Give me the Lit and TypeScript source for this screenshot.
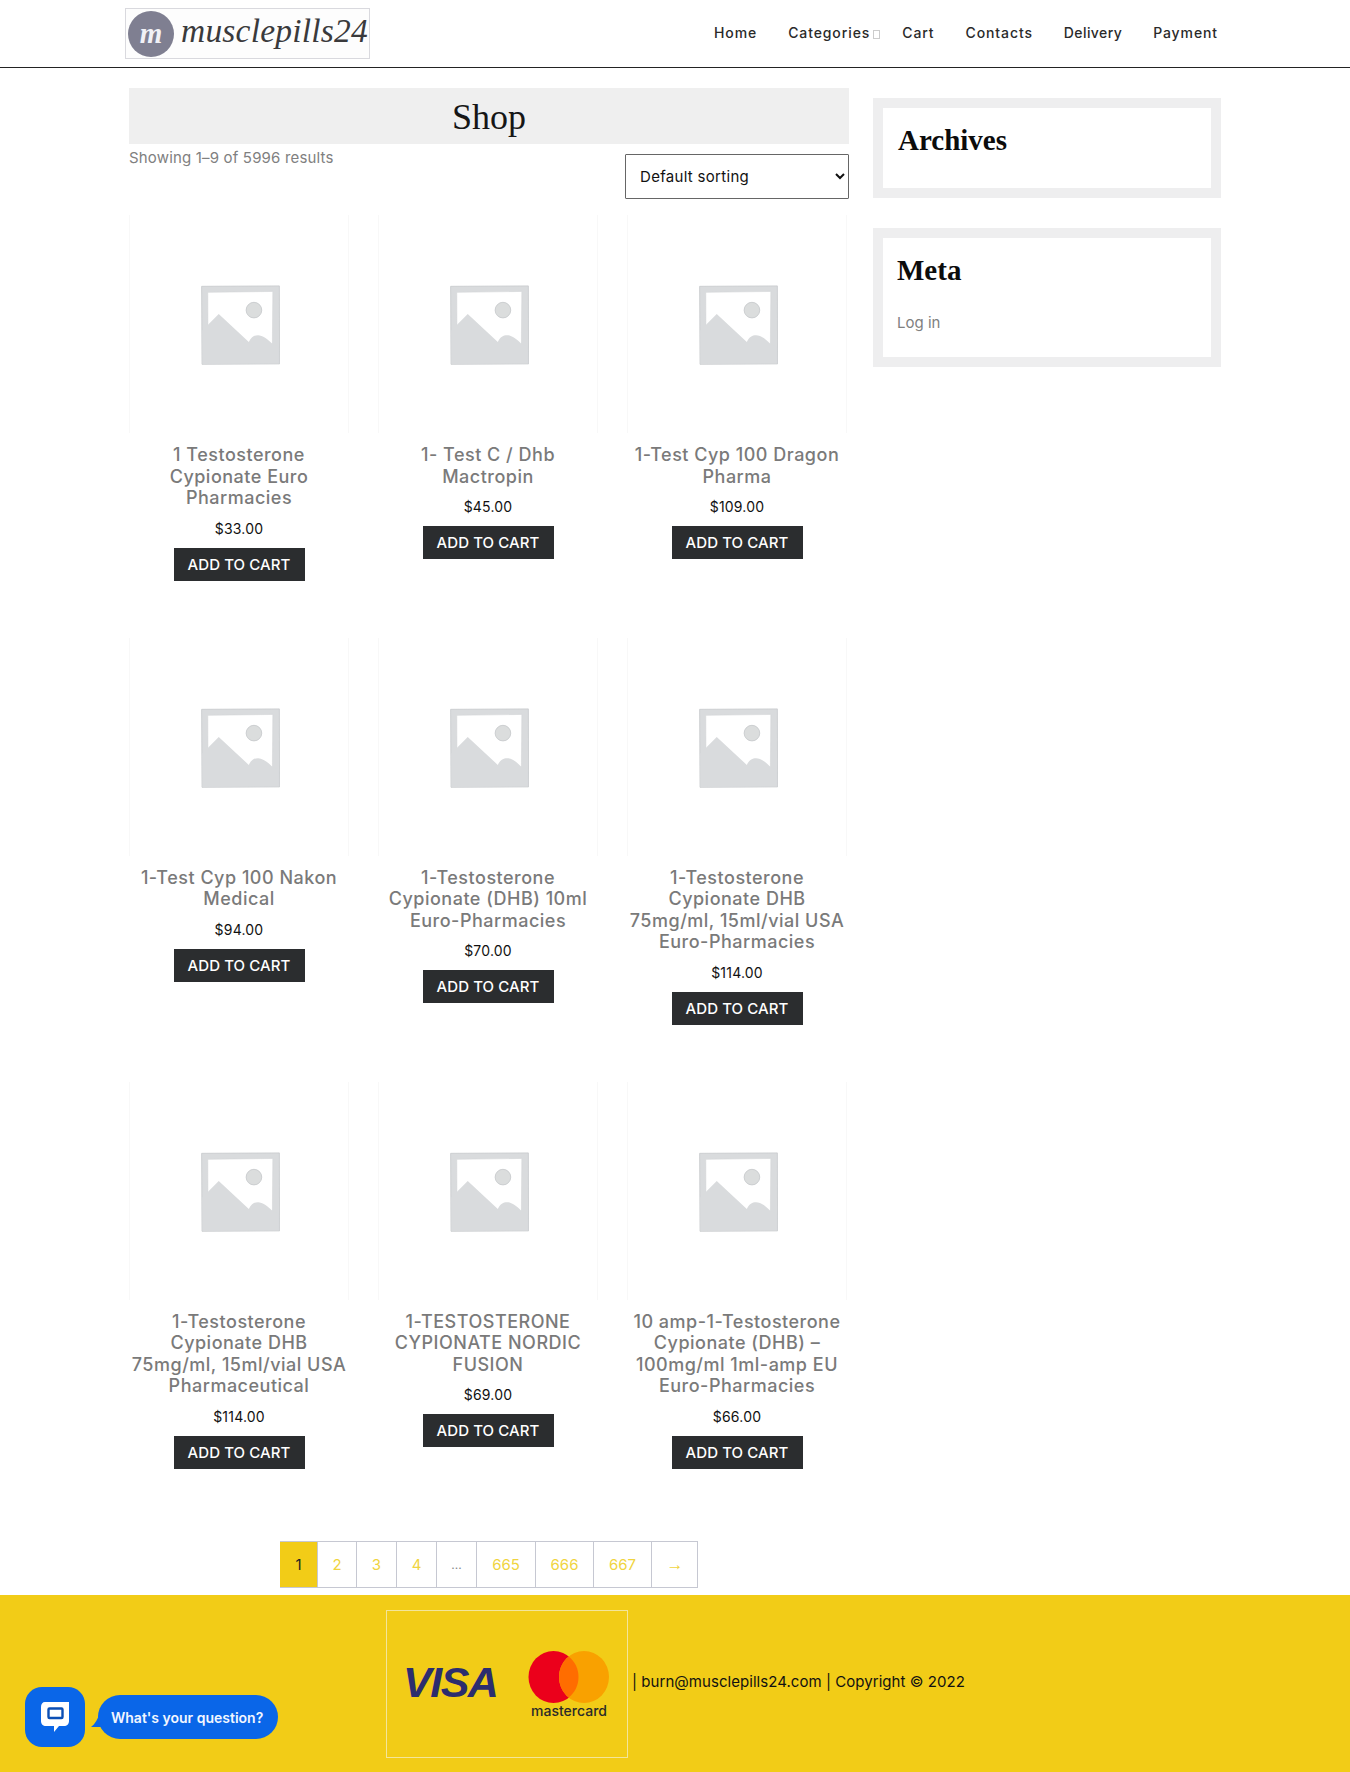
import { LitElement, html, css, svg } from "lit";
import { customElement } from "lit/decorators.js";

const products = [
  { t: ["1 Testosterone", "Cypionate Euro", "Pharmacies"], p: "$33.00" },
  { t: ["1- Test C / Dhb", "Mactropin"], p: "$45.00" },
  { t: ["1-Test Cyp 100 Dragon", "Pharma"], p: "$109.00" },
  { t: ["1-Test Cyp 100 Nakon", "Medical"], p: "$94.00" },
  { t: ["1-Testosterone", "Cypionate (DHB) 10ml", "Euro-Pharmacies"], p: "$70.00" },
  { t: ["1-Testosterone", "Cypionate DHB", "75mg/ml, 15ml/vial USA", "Euro-Pharmacies"], p: "$114.00" },
  { t: ["1-Testosterone", "Cypionate DHB", "75mg/ml, 15ml/vial USA", "Pharmaceutical"], p: "$114.00" },
  { t: ["1-TESTOSTERONE", "CYPIONATE NORDIC", "FUSION"], p: "$69.00" },
  { t: ["10 amp-1-Testosterone", "Cypionate (DHB) –", "100mg/ml 1ml-amp EU", "Euro-Pharmacies"], p: "$66.00" },
];

const placeholder = svg`<svg class="ph" viewBox="0 0 77 77" width="79" height="80" aria-hidden="true">
  <path d="M0.6 0.8 L76.4 0.4 L76.6 76.4 L1 76.8 Z" fill="#d9dbdd" stroke="#c8cacd" stroke-width=".8"/>
  <path d="M6.6 6.7 L70 5.8 L69.6 57 L6.8 60 Z" fill="#fff" stroke="#cfd1d4" stroke-width=".5"/>
  <path d="M6.6 38.4 L17.3 27.7 L46.6 55 C49 50 52 48.4 55.6 48.4 C60 48.4 65 52 69.4 56.7 L76 60 L76 76 L1.4 76.4 L1.2 44 Z" fill="#d9dbdd"/>
  <circle cx="51.6" cy="24" r="7.6" fill="#dbdddd" stroke="#c6c8cb" stroke-width=".8"/>
</svg>`;

@customElement("app-root")
export class AppRoot extends LitElement {
  static styles = css`
    :host {
      display: block;
      width: 1350px;
      height: 1772px;
      position: relative;
      overflow: hidden;
      background: #fff;
      font-family: Inter, "Noto Sans", sans-serif;
      color: #111;
    }
    * { box-sizing: border-box; }
    .header {
      height: 68px;
      border-bottom: 1px solid #232323;
      display: flex;
      align-items: flex-start;
      justify-content: space-between;
      padding: 8px 132px 0 125px;
    }
    .logo {
      width: 245px;
      height: 51px;
      border: 1px solid #d9d9de;
      display: flex;
      align-items: center;
      padding-left: 2px;
      gap: 7px;
      background: #fdfdfd;
    }
    .logo-mark {
      width: 46px;
      height: 46px;
      border-radius: 50%;
      background: #7f7f91;
      color: #f1f1f6;
      font: italic 700 29px "Liberation Serif", serif;
      display: flex;
      align-items: center;
      justify-content: center;
      flex: none;
    }
    .logo-word {
      font: italic 400 33.5px/1 "Liberation Serif", serif;
      color: #3a3a3c;
      letter-spacing: 0.2px;
      white-space: nowrap;
      transform: translateY(-3px);
    }
    .nav {
      display: flex;
      padding-top: 16px;
      font-size: 14px;
      font-weight: 450;
      line-height: 18px;
      color: #2a2a2a;
      letter-spacing: 0.9px;
    }
    .nav a { margin-left: 31px; white-space: nowrap; }
    .nav a.cat { display: flex; align-items: center; margin-right: -5px; }
    .tofu {
      width: 7px;
      height: 9px;
      border: 1px solid #ccc;
      margin: 3px 0 0 3px;
    }
    .nav a.cart-link { margin-left: 27px; }
    .nav a.delivery { letter-spacing: 0.4px; }
    .page {
      display: flex;
      gap: 24px;
      margin: 20px 0 0 129px;
      width: 1092px;
    }
    .main { width: 720px; flex: none; }
    .banner {
      height: 56px;
      background: #efefef;
      font: 400 36px/58px "Liberation Serif", serif;
      text-align: center;
      color: #161616;
    }
    .toolbar {
      height: 71px;
      display: flex;
      justify-content: space-between;
      align-items: flex-start;
      font-size: 15px;
      letter-spacing: 0.17px;
      color: #808080;
    }
    .count { line-height: 28px; }
    select {
      width: 224px;
      height: 45px;
      margin-top: 10px;
      border: 1px solid #666;
      background: #fff;
      padding: 0 10px;
      font: 400 15px Inter, sans-serif;
      letter-spacing: 0.3px;
      color: #111;
      border-radius: 1px;
    }
    .grid {
      display: grid;
      grid-template-columns: repeat(3, 220px);
      column-gap: 29px;
      row-gap: 57px;
      align-items: start;
    }
    .product {
      display: flex;
      flex-direction: column;
      align-items: center;
      text-align: center;
    }
    .thumb {
      width: 100%;
      height: 218px;
      border-left: 1px solid #f8f8f8;
      border-right: 1px solid #f8f8f8;
      display: flex;
      align-items: center;
      justify-content: center;
      padding: 2px 0 0 2px;
    }
    .title {
      margin-top: 11px;
      font-size: 18px;
      font-weight: 500;
      line-height: 21.5px;
      letter-spacing: 0.5px;
      color: #7a7a7a;
      white-space: nowrap;
    }
    .price {
      margin-top: 9px;
      font-size: 14px;
      line-height: 21px;
      color: #111;
      letter-spacing: 0.2px;
    }
    .btn {
      margin-top: 9px;
      width: 131px;
      height: 33px;
      background: #2b2d2f;
      color: #fff;
      font-size: 15px;
      font-weight: 450;
      line-height: 33px;
      letter-spacing: 0.1px;
      white-space: nowrap;
    }
    .pager {
      margin: 72px 0 0 151px;
      display: grid;
      grid-template-columns: 37px 39px 40px 40px 40px 59px 58px 58px 47px;
      width: 418px;
      height: 47px;
      border: 1px solid #c6c8d2;
      border-left: 0;
      font-size: 15px;
      line-height: 45px;
      text-align: center;
      color: #f0d440;
    }
    .pager span { border-left: 1px solid #c6c8d2; }
    .pager .cur { background: #f2cc17; color: #222; border-left: 0; }
    .pager .dots { color: #888; font-size: 12px; }
    .pager .arrow { font-family: "Liberation Sans", sans-serif; font-size: 17px; }
    .side {
      flex: 1;
      display: flex;
      flex-direction: column;
      gap: 30px;
      padding-top: 10px;
    }
    .widget {
      border: 10px solid #eeeeef;
      padding: 14px 15px 0;
    }
    .widget.arch { height: 100px; }
    .widget.meta { height: 139px; padding-left: 14px; }
    .widget h2 {
      margin: 0;
      font: 700 29px/36px "Liberation Serif", serif;
      color: #0c0c0c;
    }
    .widget a {
      display: block;
      margin-top: 25px;
      font-size: 15px;
      color: #808080;
      line-height: 20px;
    }
    .footer {
      position: absolute;
      left: 0;
      right: 0;
      top: 1595px;
      height: 177px;
      background: #f2cc17;
      display: flex;
      align-items: center;
      padding: 0 0 0 386px;
      gap: 4px;
    }
    .cards {
      width: 242px;
      height: 148px;
      border: 1px solid #f3e59a;
      display: flex;
      align-items: flex-start;
      padding: 40px 0 0 16px;
    }
    .visa {
      font: italic 700 43px/44px "Liberation Sans", sans-serif;
      color: #2c2d6e;
      letter-spacing: -1.5px;
      width: 125px;
      margin-top: 9px;
      flex: none;
    }
    .mc { display: flex; flex-direction: column; align-items: center; }
    .mc svg { display: block; }
    .mc-word {
      margin-top: 1px;
      font: 500 14px/14px Inter, sans-serif;
      color: #2a2a2a;
    }
    .copy { font-size: 15px; letter-spacing: 0.05px; color: #111; white-space: nowrap; margin-top: -4px; }
    .chat {
      position: absolute;
      left: 25px;
      top: 1687px;
      width: 60px;
      height: 60px;
      border-radius: 17px;
      background: #0a66e8;
      display: flex;
      align-items: center;
      justify-content: center;
    }
    .bubble {
      position: absolute;
      left: 98px;
      top: 1695px;
      width: 180px;
      height: 44px;
      border-radius: 22px;
      background: #0a66e8;
      color: #f2f6ff;
      font-size: 14px;
      font-weight: 600;
      line-height: 45px;
      padding-left: 13px;
      white-space: nowrap;
    }
    .tail {
      position: absolute;
      left: 90px;
      top: 1711px;
    }
  `;

  render() {
    return html`
      <div class="header">
        <div class="logo">
          <div class="logo-mark">m</div>
          <div class="logo-word">musclepills24</div>
        </div>
        <nav class="nav">
          <a>Home</a>
          <a class="cat">Categories<span class="tofu"></span></a>
          <a class="cart-link">Cart</a>
          <a>Contacts</a>
          <a class="delivery">Delivery</a>
          <a>Payment</a>
        </nav>
      </div>
      <div class="page">
        <div class="main">
          <div class="banner">Shop</div>
          <div class="toolbar">
            <div class="count">Showing 1–9 of 5996 results</div>
            <select><option>Default sorting</option></select>
          </div>
          <div class="grid">
            ${products.map(
              (p) => html`<div class="product">
                <div class="thumb">${placeholder}</div>
                <div class="title">${p.t.map((l) => html`${l}<br />`)}</div>
                <div class="price">${p.p}</div>
                <div class="btn">ADD TO CART</div>
              </div>`
            )}
          </div>
          <div class="pager">
            <span class="cur">1</span><span>2</span><span>3</span><span>4</span
            ><span class="dots">...</span><span>665</span><span>666</span><span>667</span
            ><span class="arrow">→</span>
          </div>
        </div>
        <aside class="side">
          <div class="widget arch"><h2>Archives</h2></div>
          <div class="widget meta"><h2>Meta</h2><a>Log in</a></div>
        </aside>
      </div>
      <footer class="footer">
        <div class="cards">
          <div class="visa">VISA</div>
          <div class="mc">
            <svg width="82" height="52" viewBox="0 0 82 52" aria-hidden="true">
              <ellipse cx="25.5" cy="26" rx="25" ry="26" fill="#eb001b"/>
              <ellipse cx="56" cy="26" rx="25" ry="26" fill="#f9a100"/>
              <path d="M40.7 5.5 C47 10.5 50.5 17.8 50.5 26 C50.5 34.2 47 41.5 40.7 46.5 C34.5 41.5 31 34.2 31 26 C31 17.8 34.5 10.5 40.7 5.5 Z" fill="#ff6d00"/>
            </svg>
            <div class="mc-word">mastercard</div>
          </div>
        </div>
        <div class="copy">| burn@musclepills24.com | Copyright © 2022</div>
      </footer>
      <div class="chat">
        <svg width="32" height="34" viewBox="0 0 32 34" aria-hidden="true">
          <path d="M6 2 H30 V21 C30 24 28 26 25 26 H20 L15 32 V26 H7 C4 26 2 24 2 21 V7 C2 4 3.5 2 6 2 Z" fill="#fff"/>
          <rect x="9.5" y="8.5" width="14" height="9.5" rx="1" fill="none" stroke="#0b4fb5" stroke-width="2.4"/>
        </svg>
      </div>
      <svg class="tail" width="16" height="18" viewBox="0 0 16 18" aria-hidden="true"><path d="M1 16 C5 13 8 8 10 1 L16 16 Z" fill="#0a66e8"/></svg>
      <div class="bubble">What's your question?</div>
    `;
  }
}
